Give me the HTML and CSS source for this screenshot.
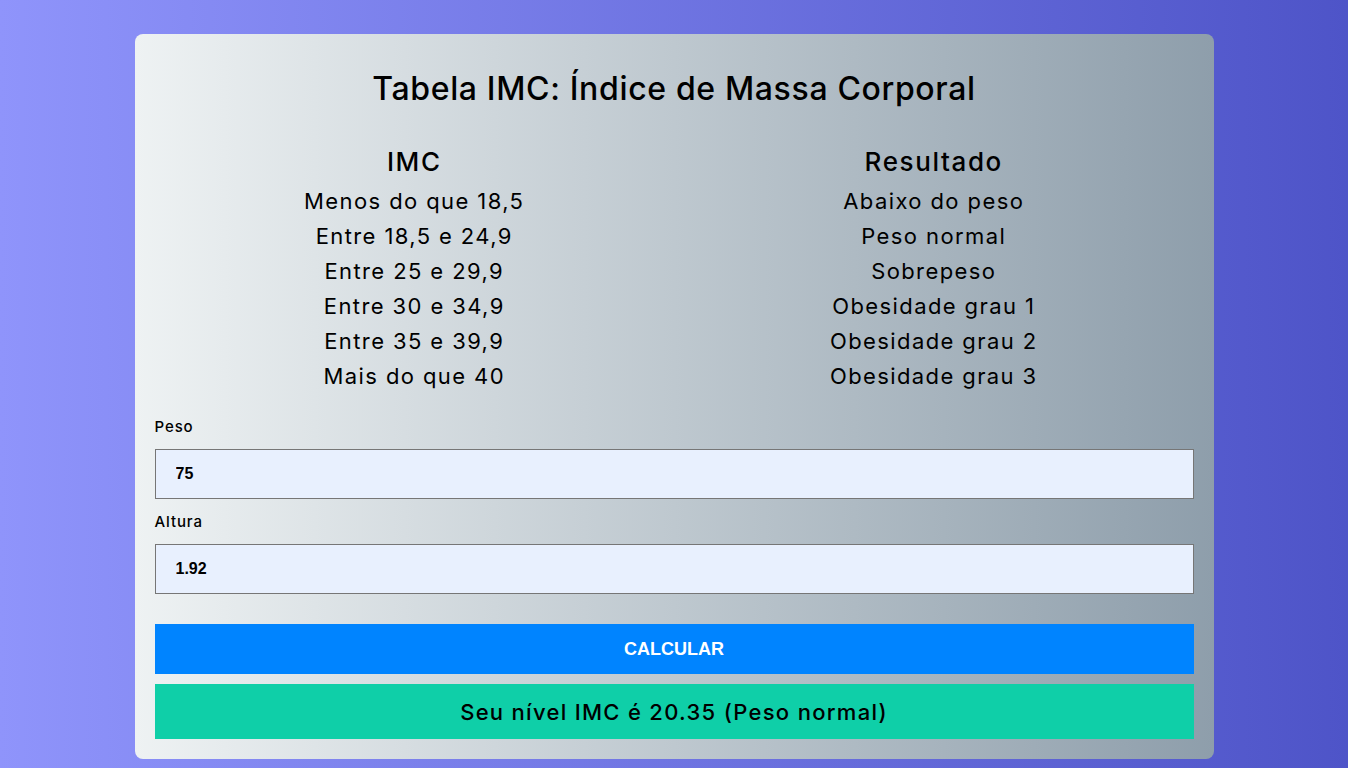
FILE: index.html
```html
<!DOCTYPE html>
<html lang="pt-BR">
<head>
<meta charset="utf-8">
<title>Tabela IMC</title>
<link rel="stylesheet" href="styles.css">
</head>
<body>
<main class="card">
  <h1 class="title">Tabela IMC: Índice de Massa Corporal</h1>
  <table class="imc-table">
    <thead>
      <tr><th>IMC</th><th>Resultado</th></tr>
    </thead>
    <tbody>
      <tr><td>Menos do que 18,5</td><td>Abaixo do peso</td></tr>
      <tr><td>Entre 18,5 e 24,9</td><td>Peso normal</td></tr>
      <tr><td>Entre 25 e 29,9</td><td>Sobrepeso</td></tr>
      <tr><td>Entre 30 e 34,9</td><td>Obesidade grau 1</td></tr>
      <tr><td>Entre 35 e 39,9</td><td>Obesidade grau 2</td></tr>
      <tr><td>Mais do que 40</td><td>Obesidade grau 3</td></tr>
    </tbody>
  </table>
  <form class="form">
    <label class="label" for="peso">Peso</label>
    <input class="input" id="peso" type="text" value="75">
    <label class="label" for="altura">Altura</label>
    <input class="input" id="altura" type="text" value="1.92">
    <button class="btn" type="button">CALCULAR</button>
    <div class="result">Seu nível IMC é 20.35 (Peso normal)</div>
  </form>
</main>
</body>
</html>
```
FILE: styles.css
```css
* { box-sizing: border-box; }
html, body { height: 100%; }
body {
  margin: 0;
  background: linear-gradient(to right, #8f94fb, #4e54c8);
  font-family: Inter, "Noto Sans", sans-serif;
  color: #000;
}
.card {
  width: 1079px;
  margin: 34px auto 0;
  padding: 20px;
  border-radius: 8px;
  background: linear-gradient(to right, #eef2f3, #8e9eab);
}
.title {
  margin: 11px 0 0;
  font-size: 32px;
  line-height: 48px;
  font-weight: 500;
  letter-spacing: 0.65px;
  text-align: center;
}
.imc-table {
  width: 100%;
  margin-top: 27px;
  border-collapse: collapse;
  table-layout: fixed;
}
.imc-table th {
  height: 43px;
  padding: 0;
  font-size: 26px;
  font-weight: 500;
  letter-spacing: 1.6px;
  vertical-align: middle;
}
.imc-table td {
  height: 35px;
  padding: 0;
  font-size: 22px;
  font-weight: 400;
  letter-spacing: 1.4px;
  text-align: center;
  vertical-align: middle;
}
.form {
  display: flex;
  flex-direction: column;
  padding-top: 23px;
}
.label {
  font-size: 15px;
  line-height: 21px;
  font-weight: 500;
  letter-spacing: 0.9px;
}
.label + .input { margin-top: 12px; }
.input + .label { margin-top: 12px; }
.input {
  height: 50px;
  padding: 0 20px;
  border: 1px solid #767676;
  background: #e8f0fe;
  font-family: "Liberation Sans", Arial, sans-serif;
  font-size: 16px;
  font-weight: 700;
  color: #000;
}
.btn {
  margin-top: 30px;
  height: 50px;
  border: 0;
  background: #0084ff;
  color: #fff;
  font-family: "Liberation Sans", Arial, sans-serif;
  font-size: 18px;
  font-weight: 700;
}
.result {
  margin-top: 10px;
  height: 55px;
  display: flex;
  align-items: center;
  justify-content: center;
  background: #0fcfa8;
  font-size: 22px;
  font-weight: 500;
  letter-spacing: 1.3px;
}
```
